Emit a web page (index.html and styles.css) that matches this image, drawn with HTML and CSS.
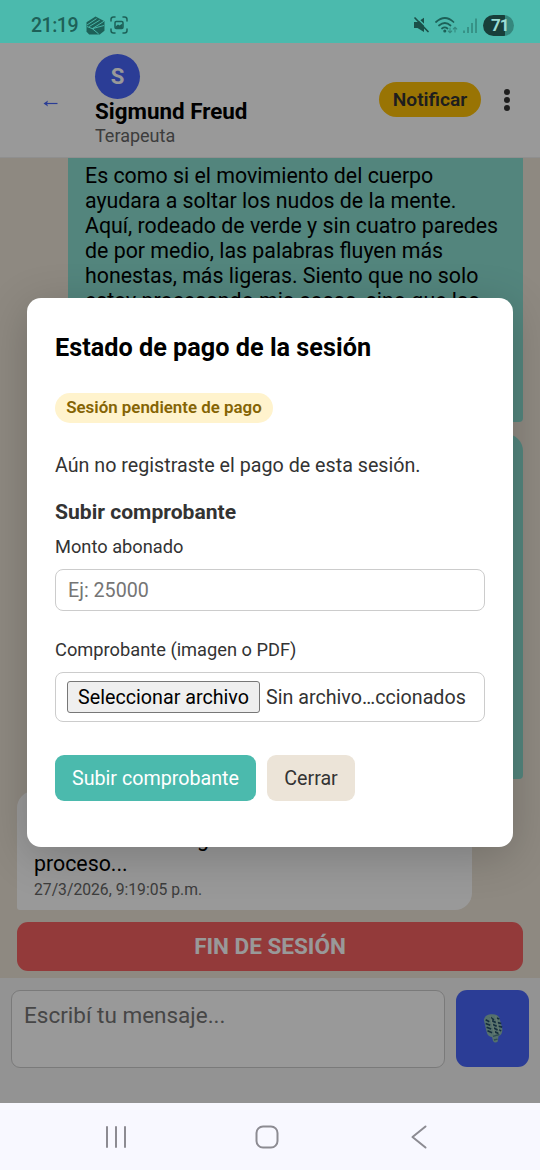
FILE: index.html
```html
<!DOCTYPE html>
<html lang="es">
<head>
<meta charset="utf-8">
<title>Estado de pago de la sesión</title>
<link rel="stylesheet" href="styles.css">
</head>
<body>
<div class="statusbar">
  <span class="clock">21:19</span>
  <svg class="st-box" width="19" height="19" viewBox="0 0 18 18"><path d="M0.500 6 9 0.500 17.500 5V14L13 17.500H3L0.500 15Z" fill="#1d6158"/><path d="M1 8.500 10 2.500M3 10 13 4M6 12 17 5M1 10 6 12 17 9M6 12 12 17" stroke="#4bbaad" stroke-width="0.900" fill="none"/></svg>
  <svg class="st-shot" width="18" height="18" viewBox="0 0 18 18" fill="none" stroke="#1d6158" stroke-width="1.500" stroke-linecap="round"><path d="M1 5V3.500Q1 1 3.500 1H5M13 1H14.500Q17 1 17 3.500V5M17 13V14.500Q17 17 14.500 17H13M5 17H3.500Q1 17 1 14.500V13"/><rect x="5" y="5.500" width="8" height="7" rx="1.200"/><path d="M5.500 10.500 8 8.500 9.500 9.500 12.500 7.500V12H5.500Z" fill="#1d6158" stroke="none"/></svg>
  <span class="grow"></span>
  <svg class="st-mute" width="16" height="16" viewBox="0 0 16 16"><path d="M1 5H4.500L11 0.800V15L4.500 11H1Z" fill="#1b5049"/><path d="M3.500 0.500 16 12.500" stroke="#4bbaad" stroke-width="1.600"/><path d="M2 1 15 14.500" stroke="#1b5049" stroke-width="1.700" stroke-linecap="round"/></svg>
  <svg class="st-wifi" width="23" height="17" viewBox="0 0 23 17" fill="none" stroke="#1d6158" stroke-width="1.700" stroke-linecap="round"><path d="M1 5Q10 -3 18.500 5M4 8.500Q10 3.500 15.500 8.500M7 11.500Q9.800 9.200 12.500 11.500"/><circle cx="9.800" cy="14" r=".7" fill="#1d6158"/><path d="M15 11V15.500M13.300 14 15 15.800 16.700 14M20 15V10.500M18.300 12 20 10.200 21.700 12" stroke="#33897e" stroke-width="1.100"/></svg>
  <svg class="st-signal" width="14" height="15" viewBox="0 0 14 15" stroke="#33897e" stroke-width="1.600"><path d="M1 12.500V15M5 9V15M9 5V15M13 .5V15"/></svg>
  <span class="battery">71</span>
</div>

<div class="screen">
  <header class="header">
    <svg class="back" width="15" height="9" viewBox="0 0 15 9"><path d="M3 4.500H14.500" stroke="#4967f8" stroke-width="1.200"/><path d="M0.500 4.500 5 1.500 4 4.500 5 7.500Z" fill="#4967f8"/></svg>
    <div class="person">
      <div class="avatar">S</div>
      <div class="name">Sigmund Freud</div>
      <div class="role">Terapeuta</div>
    </div>
    <button class="notify">Notificar</button>
    <div class="kebab"><i></i><i></i><i></i></div>
  </header>

  <main class="chat">
    <div class="msg mine first">Es como si el movimiento del cuerpo<br>ayudara a soltar los nudos de la mente.<br>Aquí, rodeado de verde y sin cuatro paredes<br>de por medio, las palabras fluyen más<br>honestas, más ligeras. Siento que no solo<br>estoy procesando mis cosas, sino que las</div>
    <div class="msg mine second"></div>
    <div class="msg theirs"><span class="tail">g</span><br>proceso...<div class="time">27/3/2026, 9:19:05 p.m.</div></div>
    <button class="end">FIN DE SESIÓN</button>
  </main>

  <footer class="composer">
    <div class="message-box">Escribí tu mensaje...</div>
    <button class="mic"><svg width="22" height="32" viewBox="0 0 24 34"><path d="M2 7Q3 2 9 1Q17 0 19 5L22 16Q23 23 18 25L17 31Q14 33 12 30L11 26Q6 25 5 20Z" fill="#8ebdb5"/><path d="M4 7 8 9M4 11 9 13M5 15 10 17M6 19 11 21M9 4 13 7M11 8 15 10M12 12 16 14M13 16 17 18M14 20 18 22M16 5 19 6M17 10 21 11M18 14 22 15M18 18 21 19" stroke="#244d66" stroke-width="1.800"/><path d="M9 3 14 23M15 3 19 22" stroke="#b0d0bd" stroke-width="1"/><path d="M12 25 19 23M13 29 17 28" stroke="#527f88" stroke-width="1.500"/></svg></button>
  </footer>

  <div class="overlay">
    <section class="modal">
      <h2>Estado de pago de la sesión</h2>
      <span class="badge">Sesión pendiente de pago</span>
      <p class="info">Aún no registraste el pago de esta sesión.</p>
      <h3>Subir comprobante</h3>
      <label for="amount">Monto abonado</label>
      <input id="amount" class="field" placeholder="Ej: 25000">
      <label class="file-label">Comprobante (imagen o PDF)</label>
      <div class="field file"><button class="pick">Seleccionar archivo</button><span class="file-name">Sin archivo…ccionados</span></div>
      <div class="actions"><button class="btn primary">Subir comprobante</button><button class="btn">Cerrar</button></div>
    </section>
  </div>
</div>

<nav class="navbar">
  <svg width="22" height="24" viewBox="0 0 22 24" stroke="#8c8b92" stroke-width="2" stroke-linecap="round"><path d="M2 2V22M11 2V22M20 2V22"/></svg>
  <svg width="24" height="24" viewBox="0 0 24 24" fill="none" stroke="#8c8b92" stroke-width="2"><rect x="1.500" y="1.500" width="21" height="21" rx="6.500"/></svg>
  <svg width="16" height="24" viewBox="0 0 16 24" fill="none" stroke="#8c8b92" stroke-width="2" stroke-linecap="round" stroke-linejoin="round"><path d="M14.500 1.500 1.500 12 14.500 22.500"/></svg>
</nav>
</body>
</html>
```

FILE: styles.css
```css
* { box-sizing: border-box; }
body {
  margin: 0;
  width: 540px;
  height: 1170px;
  display: flex;
  flex-direction: column;
  overflow: hidden;
  font-family: Roboto, sans-serif;
  color: #000;
}
button { font-family: inherit; border: 0; padding: 0; }
svg { display: block; flex: none; }

.statusbar {
  height: 43px;
  flex: none;
  display: flex;
  align-items: center;
  padding: 7px 26px 0 31px;
  background: #4bbaad;
}
.clock { font-size: 19.5px; font-weight: 500; letter-spacing: -.5px; color: #1d6158; width: 55px; white-space: nowrap; }
.st-shot { margin-left: 5px; }
.grow { flex: 1; }
.st-wifi { margin-left: 6px; }
.st-signal { margin-left: 5px; }
.battery {
  margin-left: 6px;
  width: 31px;
  height: 21px;
  padding-left: 8px;
  border-radius: 11px;
  background: linear-gradient(90deg, #183f3a 22px, #35877d 22px);
  color: #9bdcd2;
  font-size: 17px;
  font-weight: 700;
  line-height: 21px;
  letter-spacing: -1px;
}

.screen { position: relative; height: 1060px; flex: none; display: flex; flex-direction: column; }

.header {
  height: 115px;
  flex: none;
  display: flex;
  align-items: center;
  padding: 0 30px 1px 43px;
  background: #fff;
  border-bottom: 1px solid #eee;
}
.back { margin-top: 7px; }
.person { margin-left: 37px; flex: 1; }
.avatar {
  width: 45px;
  height: 45px;
  border-radius: 50%;
  background: #4967fb;
  color: #fff;
  font-size: 22px;
  font-weight: 700;
  line-height: 45px;
  text-align: center;
}
.name { font-size: 22.4px; font-weight: 700; line-height: 24px; margin-bottom: 2px; }
.role { font-size: 18px; line-height: 21px; color: #666; }
.notify {
  width: 102px;
  height: 35px;
  border-radius: 18px;
  background: #ffc107;
  color: #333;
  font-size: 19.2px;
  font-weight: 600;
  padding-bottom: 1px;
}
.kebab { margin-left: 23px; display: flex; flex-direction: column; gap: 2px; }
.kebab i { width: 6px; height: 6px; border-radius: 50%; background: #333; }

.chat {
  height: 820px;
  flex: none;
  display: flex;
  flex-direction: column;
  gap: 12px;
  padding: 0 17px;
  background: #ede4d8;
  overflow: hidden;
}
.msg { width: 455px; flex: none; font-size: 21.35px; line-height: 25px; white-space: nowrap; }
.mine { align-self: flex-end; background: #8aded0; border-radius: 17px 17px 4px 17px; }
.first { height: 264px; padding: 5px 17px; border-radius: 0 0 4px 17px; }
.second { height: 345px; }
.theirs { height: 119px; padding: 35px 17px 0; background: #fff; border-radius: 17px 17px 17px 3px; }
.tail { margin-left: 163px; }
.time { font-size: 15.7px; line-height: 22px; margin-top: 3px; color: #666; }
.end {
  height: 49px;
  flex: none;
  border-radius: 11px;
  background: #f56161;
  color: #fff;
  font-size: 22.5px;
  font-weight: 700;
  padding-bottom: 2px;
}

.composer { flex: 1; display: flex; align-items: flex-start; gap: 11px; padding: 12px 11px; background: #f5f5f5; }
.message-box {
  width: 434px;
  height: 78px;
  padding: 11px 12px;
  border: 1px solid #ccc;
  border-radius: 9px;
  background: #fff;
  color: #757575;
  font-size: 22.5px;
  line-height: 26px;
}
.mic {
  width: 73px;
  height: 77px;
  display: grid;
  place-items: center;
  border-radius: 11px;
  background: #4967fb;
}

.overlay {
  position: absolute;
  inset: 0;
  display: flex;
  align-items: center;
  justify-content: center;
  padding-bottom: 1px;
  background: rgba(0, 0, 0, .4);
}
.modal {
  width: 486px;
  height: 549px;
  padding: 28px;
  display: flex;
  flex-direction: column;
  align-items: flex-start;
  border-radius: 14px;
  background: #fff;
  box-shadow: 0 9px 45px rgba(0, 0, 0, .2);
  color: #333;
}
h2 { margin: 7px 0 0; font-size: 25.25px; line-height: 30px; font-weight: 700; color: #000; white-space: nowrap; }
.badge {
  margin-top: 30px;
  width: 218px;
  height: 30px;
  border-radius: 15px;
  background: #fff3cd;
  color: #856404;
  font-size: 16.9px;
  font-weight: 600;
  line-height: 29px;
  text-align: center;
}
.info { margin: 31px 0 0; font-size: 19.7px; line-height: 24px; }
h3 { margin: 21px 0 0; font-size: 21.1px; line-height: 26px; font-weight: 700; }
label { margin-top: 11px; font-size: 18.25px; line-height: 22px; }
.field {
  width: 430px;
  height: 42px;
  margin-top: 11px;
  padding: 0 12px;
  border: 1px solid #ccc;
  border-radius: 8px;
  background: #fff;
  font-family: inherit;
  font-size: 19.7px;
}
.field::placeholder { color: #757575; }
.file-label { margin-top: 28px; }
.file { height: 50px; padding: 0 11px; display: flex; align-items: center; gap: 6px; white-space: nowrap; }
.pick {
  width: 193px;
  height: 32px;
  border: 1px solid #777;
  border-radius: 3px;
  background: #efefef;
  font-size: 19.7px;
}
.actions { display: flex; gap: 11px; margin-top: 33px; }
.btn { width: 88px; height: 46px; padding-top: 1px; border-radius: 9px; background: #ece4d8; color: #333; font-size: 19.7px; }
.primary { width: 201px; background: #4bbaad; color: #fff; }

.navbar { height: 67px; flex: none; display: flex; align-items: center; background: #f8f8ff; padding: 0 0 0 105px; }
.navbar svg:nth-child(2) { margin-left: 128px; }
.navbar svg:nth-child(3) { margin-left: 132px; }
```
